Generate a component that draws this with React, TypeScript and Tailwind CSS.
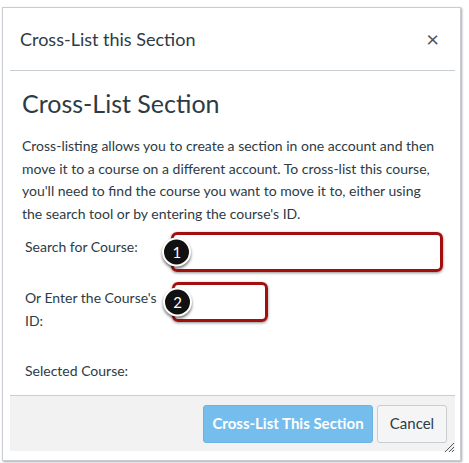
import React from "react";

function Badge({ n }: { n: string }) {
  return (
    <div className="absolute left-[-12px] top-1/2 -translate-y-1/2 w-[29px] h-[29px] rounded-full bg-[#111] border-2 border-white shadow-[0_2px_3px_rgba(0,0,0,0.55)] flex items-center justify-center text-white text-[15px] leading-none">
      {n}
    </div>
  );
}

export default function App() {
  return (
    <div className="w-[469px] h-[463px] bg-white relative" style={{ fontFamily: "Lato, 'Open Sans', sans-serif" }}>
      <div className="absolute left-[2px] top-[7px] w-[459px] h-[454px] border border-[#c9cdd1] shadow-[1px_1px_2px_rgba(0,0,0,0.35)] bg-white">
        <div className="ml-[7px] w-[445px] h-[443px] flex flex-col text-[#2d3b45]">
          <div className="h-[63px] border-b border-[#c7cdd1] flex items-center justify-between pl-[10px] pr-[16px]">
            <span className="text-[18px]">Cross-List this Section</span>
            <span className="text-[22px] leading-none text-[#4a5560]">×</span>
          </div>
          <div className="flex-1 px-[12px] pt-[16px]">
            <h1 className="text-[25px] leading-[32px]">Cross-List Section</h1>
            <p className="mt-[16px] text-[14px] leading-[22.7px]">
              Cross-listing allows you to create a section in one account and then move it to a course on a different account. To cross-list this course, you'll need to find the course you want to move it to, either using the search tool or by entering the course's ID.
            </p>
            <div className="mt-[6px] flex items-start">
              <div className="w-[150px] pl-[3px] pt-[4px] text-[14px] leading-[22px]">Search for Course:</div>
              <div className="relative w-[273px] h-[40px] rounded-[6px] border-[3px] border-[#a30f0f] shadow-[0_1px_3px_rgba(0,0,0,0.45)]">
                <Badge n="1" />
              </div>
            </div>
            <div className="mt-[10px] flex items-start">
              <div className="w-[150px] pl-[3px] pt-[4px] text-[14px] leading-[23px]">Or Enter the Course's ID:</div>
              <div className="relative w-[96px] h-[40px] rounded-[6px] border-[3px] border-[#a30f0f] shadow-[0_1px_3px_rgba(0,0,0,0.45)]">
                <Badge n="2" />
              </div>
            </div>
            <div className="mt-[28px] pl-[3px] text-[14px] leading-[22px]">Selected Course:</div>
          </div>
          <div className="h-[56px] border-t border-[#c7cdd1] bg-[#f2f2f2] flex items-center justify-end pr-[8px] gap-[4px] relative">
            <button className="h-[38px] w-[170px] rounded-[3px] bg-[#74bdec] border border-[#6cb4e2] text-white text-[15px] font-bold">
              Cross-List This Section
            </button>
            <button className="h-[38px] w-[70px] rounded-[3px] bg-[#f5f5f5] border border-[#c7cdd1] text-[#2d3b45] text-[15px]">
              Cancel
            </button>
            <svg className="absolute right-[0px] bottom-[-2px]" width="12" height="12" viewBox="0 0 12 12">
              <line x1="2" y1="11" x2="11" y2="2" stroke="#555" strokeWidth="1" />
              <line x1="6" y1="11" x2="11" y2="6" stroke="#555" strokeWidth="1" />
              <line x1="9" y1="11" x2="11" y2="9" stroke="#555" strokeWidth="1" />
            </svg>
          </div>
        </div>
      </div>
    </div>
  );
}
